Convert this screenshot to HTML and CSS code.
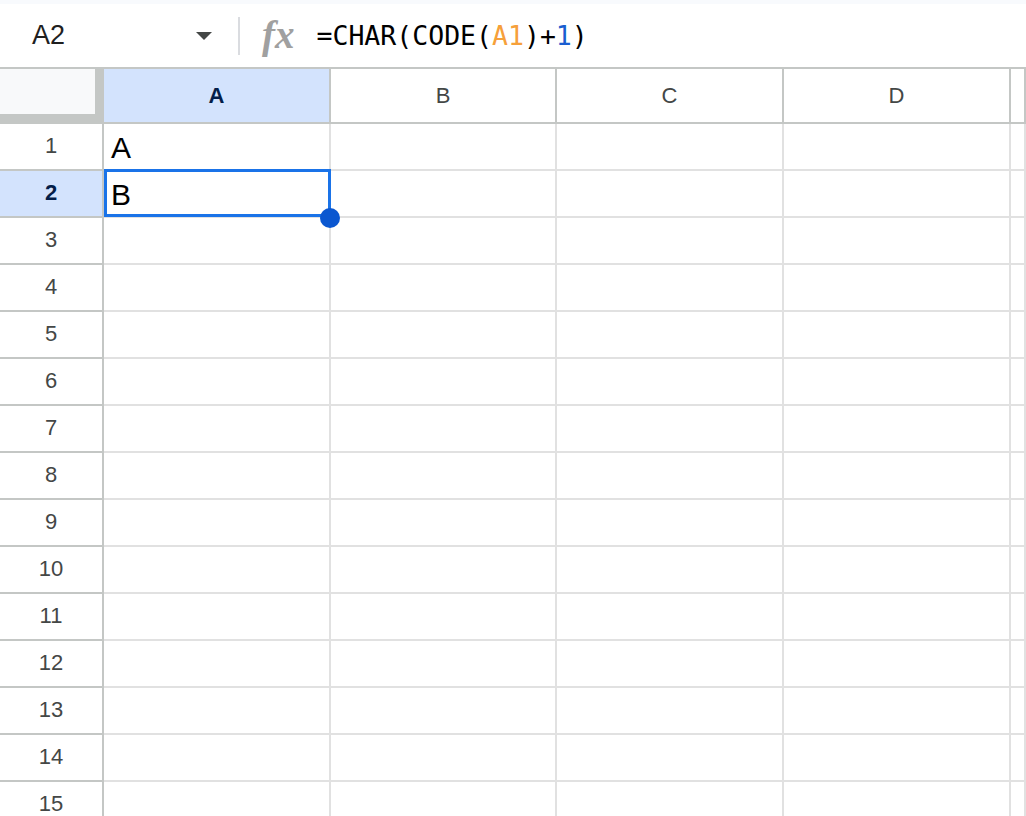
FILE: index.html
```html
<!DOCTYPE html>
<html>
<head>
    <link rel="stylesheet" href="styles.css">
</head>
<body>
    <div class="top-strip"></div>
    <div class="formula-bar">
        <div class="name-box">
            <span class="cell-ref">A2</span>
            <span class="caret"></span>
        </div>
        <div class="divider"></div>
        <span class="fx">fx</span>
        <div class="formula">=CHAR(CODE(<span class="ref-a1">A1</span>)+<span class="num">1</span>)</div>
    </div>

    <div class="sheet">
        <div class="corner"></div>
        <div class="ch selected">A</div>
        <div class="ch">B</div>
        <div class="ch">C</div>
        <div class="ch">D</div>
        <div class="ch"></div>

        <div class="rh">1</div><div class="c">A</div><div class="c"></div><div class="c"></div><div class="c"></div><div class="c"></div>
        <div class="rh selected">2</div><div class="c">B</div><div class="c"></div><div class="c"></div><div class="c"></div><div class="c"></div>
        <div class="rh">3</div><div class="c"></div><div class="c"></div><div class="c"></div><div class="c"></div><div class="c"></div>
        <div class="rh">4</div><div class="c"></div><div class="c"></div><div class="c"></div><div class="c"></div><div class="c"></div>
        <div class="rh">5</div><div class="c"></div><div class="c"></div><div class="c"></div><div class="c"></div><div class="c"></div>
        <div class="rh">6</div><div class="c"></div><div class="c"></div><div class="c"></div><div class="c"></div><div class="c"></div>
        <div class="rh">7</div><div class="c"></div><div class="c"></div><div class="c"></div><div class="c"></div><div class="c"></div>
        <div class="rh">8</div><div class="c"></div><div class="c"></div><div class="c"></div><div class="c"></div><div class="c"></div>
        <div class="rh">9</div><div class="c"></div><div class="c"></div><div class="c"></div><div class="c"></div><div class="c"></div>
        <div class="rh">10</div><div class="c"></div><div class="c"></div><div class="c"></div><div class="c"></div><div class="c"></div>
        <div class="rh">11</div><div class="c"></div><div class="c"></div><div class="c"></div><div class="c"></div><div class="c"></div>
        <div class="rh">12</div><div class="c"></div><div class="c"></div><div class="c"></div><div class="c"></div><div class="c"></div>
        <div class="rh">13</div><div class="c"></div><div class="c"></div><div class="c"></div><div class="c"></div><div class="c"></div>
        <div class="rh">14</div><div class="c"></div><div class="c"></div><div class="c"></div><div class="c"></div><div class="c"></div>
        <div class="rh">15</div><div class="c"></div><div class="c"></div><div class="c"></div><div class="c"></div><div class="c"></div>

        <div class="selection"></div>
        <div class="fill-handle"></div>
    </div>
</body>
</html>
```

FILE: styles.css
```css
html, body {
    margin: 0;
    height: 100%;
    overflow: hidden;
}

body {
    background: #fff;
    font-family: 'Liberation Sans', Arial, sans-serif;
    color: #000;
}

.top-strip {
    height: 4px;
    background: #f8fafd;
}

.formula-bar {
    height: 63px;
    display: flex;
    align-items: center;
    padding-left: 32px;
}

.name-box {
    width: 180px;
    display: flex;
    align-items: center;
    justify-content: space-between;
}

.cell-ref {
    font-size: 27px;
    color: #1f1f1f;
}

.caret {
    width: 0;
    height: 0;
    border-left: 8.5px solid transparent;
    border-right: 8.5px solid transparent;
    border-top: 8px solid #444746;
    margin-top: 1px;
}

.divider {
    width: 2px;
    height: 38px;
    background: #dadce0;
    margin-left: 26px;
}

.fx {
    font-family: 'Liberation Serif', serif;
    font-style: italic;
    font-weight: bold;
    font-size: 39px;
    color: #a0a0a0;
    margin-left: 22px;
    margin-top: -3px;
}

.formula {
    font-family: 'DejaVu Sans Mono', monospace;
    font-size: 26.5px;
    color: #000;
    margin-left: 22px;
}

.ref-a1 {
    color: #f6a03a;
}

.num {
    color: #1a5ed0;
}

.sheet {
    position: relative;
    display: grid;
    grid-template-columns: 104px 227px 226px 227px 227px 1fr;
    grid-template-rows: 55px;
    grid-auto-rows: 47px;
    border-top: 2px solid #c4c7c5;
}

.sheet > div {
    box-sizing: border-box;
}

.corner {
    background: #f8f9fa;
    border-right: 9px solid #c4c7c5;
    border-bottom: 10px solid #c4c7c5;
}

.ch, .rh {
    font-size: 22px;
    color: #444746;
    text-align: center;
    border-right: 2px solid #c4c7c5;
    border-bottom: 2px solid #c4c7c5;
}

.ch {
    line-height: 53px;
}

.rh {
    line-height: 43px;
}

.ch.selected, .rh.selected {
    background: #d3e3fd;
    color: #041e49;
    font-weight: bold;
}

.c {
    font-size: 30px;
    line-height: 44px;
    padding: 2px 0 0 7px;
    border-right: 2px solid #e1e1e1;
    border-bottom: 2px solid #e1e1e1;
}

.selection {
    position: absolute;
    left: 104px;
    top: 100px;
    width: 227px;
    height: 48px;
    border: 3px solid #1a73e8;
}

.fill-handle {
    position: absolute;
    left: 320px;
    top: 139px;
    width: 20px;
    height: 20px;
    border-radius: 50%;
    background: #0b57d0;
}
```
